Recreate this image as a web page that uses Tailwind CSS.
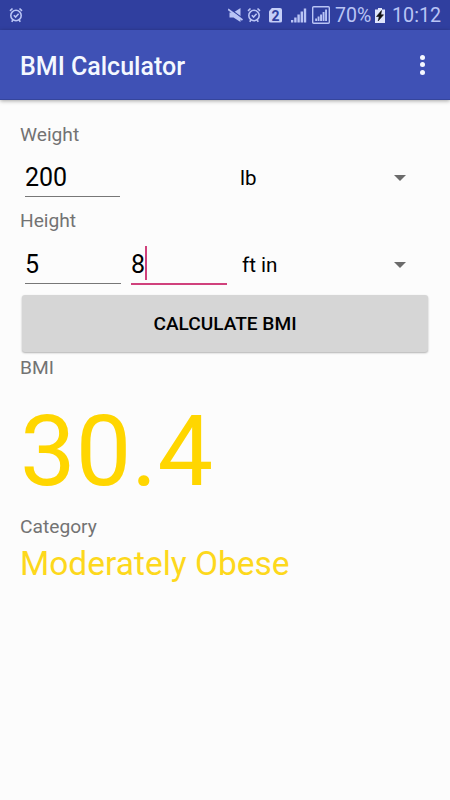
<!DOCTYPE html>
<html lang="en">
<head>
    <meta charset="UTF-8">
    <meta name="viewport" content="width=device-width, initial-scale=1.0">
    <title>BMI Calculator</title>
    <script src="https://cdn.jsdelivr.net/npm/@tailwindcss/browser@4"></script>
</head>
<body class="font-[Roboto,sans-serif] bg-[#fcfcfc]">
    <div class="min-h-screen flex flex-col">
        <!-- Status bar -->
        <div class="h-[30px] bg-[#303f9f] text-[#b9c4f5] flex items-center justify-between pl-[9px] pr-[10px]">
            <svg class="w-[14px] h-4" viewBox="0 0 14 16" fill="none" stroke="currentColor" stroke-width="1.6">
                <circle cx="7" cy="8.5" r="5.2"/>
                <path d="M4.8 8.2l1.8 1.8 3-3.2M1 3.8l2.5-2.3M13 3.8l-2.5-2.3M3.8 13l-1 1.8M10.2 13l1 1.8"/>
            </svg>
            <div class="flex items-center">
                <svg class="w-[15px] h-4" viewBox="0 0 15 16">
                    <path d="M1.500 5.500h4L12.500 1v14L5.500 10.500h-4z" fill="currentColor"/>
                    <path d="M1 1.200L14.500 11.300" stroke="#303f9f" stroke-width="1.300"/>
                    <path d="M0 2.200L14.500 13" stroke="currentColor" stroke-width="1.800"/>
                </svg>
                <svg class="w-[14px] h-4 ml-1" viewBox="0 0 14 16" fill="none" stroke="currentColor" stroke-width="1.6">
                    <circle cx="7" cy="8.5" r="5.2"/>
                    <path d="M4.8 8.2l1.8 1.8 3-3.2M1 3.8l2.5-2.3M13 3.8l-2.5-2.3M3.8 13l-1 1.8M10.2 13l1 1.8"/>
                </svg>
                <div class="w-[13px] h-[15px] ml-2 rounded-[2px] bg-[#c5cef8] text-[#303f9f] text-[14px] leading-[16px] font-bold text-center [clip-path:polygon(25%_0,100%_0,100%_100%,0_100%,0_25%)]">2</div>
                <svg class="w-4 h-4 ml-[9px]" viewBox="0 0 16 16" fill="currentColor">
                    <path d="M0 13h2.300v2.500H0zM3.200 10.500h2.400v5H3.200zM6.400 7.500h2.400v8H6.400zM9.600 4.500H12v11H9.600zM12.800 1.500h2.400v14h-2.400z"/>
                </svg>
                <svg class="w-[18px] h-[18px] ml-[5px]" viewBox="0 0 18 18" fill="currentColor">
                    <rect x="0.700" y="0.700" width="16.600" height="16.600" rx="1" fill="none" stroke="currentColor" stroke-width="1.400"/>
                    <path d="M3.200 12.500H5v2.500H3.200zM5.600 10.500h1.900V15H5.600zM8.100 8.500H10V15H8.100zM10.600 6h1.900v9h-1.900zM13.100 3.500H15V15h-1.900z"/>
                </svg>
                <span class="text-[19.5px] leading-[30px] ml-[5px] pt-[2px] w-[40px] whitespace-nowrap">70%</span>
                <svg class="w-[10px] h-[15px]" viewBox="0 0 10 15">
                    <path d="M3 0h4v1.500h3V15H0V1.500h3z" fill="#dfe4fb"/>
                    <path d="M6.500 2.500L1.500 8.500h2.700L3.200 13l5.300-6.200H5.800z" fill="#111" stroke="#111" stroke-width="0.600"/>
                </svg>
                <span class="text-[19.7px] leading-[30px] ml-[7px] pt-[2px] w-[48px] whitespace-nowrap">10:12</span>
            </div>
        </div>

        <!-- App bar -->
        <header class="h-[70px] bg-[#3f51b5] border-b border-[#35459c] shadow-[0_1px_4px_rgba(0,0,0,0.35)] flex items-center justify-between pl-5 pr-[25px]">
            <h1 class="text-[25px] leading-[67px] pt-[3px] font-medium text-[#f4f8ff]">BMI Calculator</h1>
            <div class="flex flex-col gap-[2.5px]">
                <span class="size-[5px] rounded-full bg-[#f4f8ff]"></span>
                <span class="size-[5px] rounded-full bg-[#f4f8ff]"></span>
                <span class="size-[5px] rounded-full bg-[#f4f8ff]"></span>
            </div>
        </header>

        <main class="px-5 pt-6 text-[#737373] text-[19.2px] leading-[22px]">
            <div>Weight</div>
            <div class="h-16 pt-3 pl-[5px] flex text-black">
                <div class="w-[95px] h-[39px] border-b border-[#777] text-[25px] leading-[40px]">200</div>
                <div class="ml-[120px] w-[166px] h-[39px] flex items-center justify-between">
                    <span class="text-[20.5px] leading-[40px]">lb</span>
                    <svg class="w-3 h-[6px]" viewBox="0 0 12 6"><path d="M0 0h12L6 6z" fill="#6b6b6b"/></svg>
                </div>
            </div>

            <div>Height</div>
            <div class="h-[63px] pt-[13px] pl-[5px] flex text-black">
                <div class="w-24 h-[39px] border-b border-[#777] text-[25px] leading-[40px]">5</div>
                <div class="ml-[10px] w-24 h-10 border-b-2 border-[#d0417c] text-[25px] leading-[40px] flex">
                    <span>8</span>
                    <span class="w-[2px] h-[34px] mt-px bg-[#d0417c]"></span>
                </div>
                <div class="ml-[15px] w-[164px] h-[39px] flex items-center justify-between">
                    <span class="text-[20.7px] leading-[40px]">ft in</span>
                    <svg class="w-3 h-[6px]" viewBox="0 0 12 6"><path d="M0 0h12L6 6z" fill="#6b6b6b"/></svg>
                </div>
            </div>

            <button class="block ml-[2px] w-[406px] h-[57px] rounded-[3px] bg-[#d6d6d6] shadow-[0_1px_2px_rgba(0,0,0,0.3)] text-black text-[19.1px] font-medium">CALCULATE BMI</button>

            <div class="mt-[5px]">BMI</div>
            <div class="mt-[13px] text-[99px] leading-[119px] text-[#ffd600]">30.4</div>
            <div class="mt-[5px]">Category</div>
            <div class="mt-[6px] text-[33.5px] leading-[40px] text-[#fdd81c]">Moderately Obese</div>
        </main>
    </div>
</body>
</html>
